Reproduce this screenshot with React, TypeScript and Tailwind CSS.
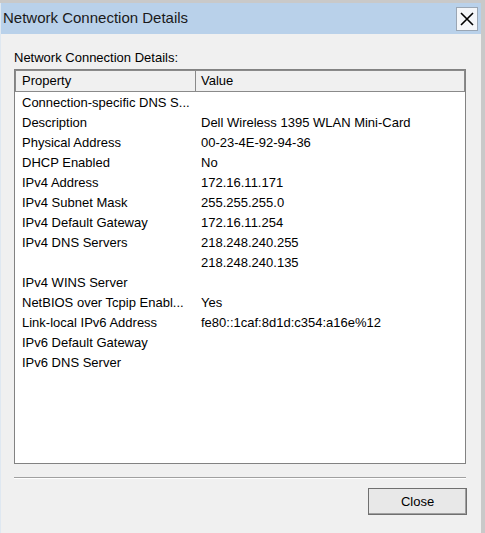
const rows: [string, string][] = [
  ["Connection-specific DNS S...", ""],
  ["Description", "Dell Wireless 1395 WLAN Mini-Card"],
  ["Physical Address", "00-23-4E-92-94-36"],
  ["DHCP Enabled", "No"],
  ["IPv4 Address", "172.16.11.171"],
  ["IPv4 Subnet Mask", "255.255.255.0"],
  ["IPv4 Default Gateway", "172.16.11.254"],
  ["IPv4 DNS Servers", "218.248.240.255"],
  ["", "218.248.240.135"],
  ["IPv4 WINS Server", ""],
  ["NetBIOS over Tcpip Enabl...", "Yes"],
  ["Link-local IPv6 Address", "fe80::1caf:8d1d:c354:a16e%12"],
  ["IPv6 Default Gateway", ""],
  ["IPv6 DNS Server", ""],
];

export default function App() {
  return (
    <div className="flex h-[533px] w-[485px] flex-col overflow-hidden bg-[#c9c9c9] pt-[3px] pr-[4px] font-['Liberation_Sans',Arial,sans-serif] text-[13px] text-black">
      <div className="flex flex-1 flex-col border-l border-[#dfe8f1] bg-[#f0f0f0]">
        {/* title bar */}
        <div className="flex h-[31px] items-center justify-between bg-[#b9d1ea] pl-[2px] pr-[3px]">
          <span className="text-[15px] text-[#1a1a1a]">Network Connection Details</span>
          <button className="mt-[1px] flex h-[24px] w-[22px] items-center justify-center border border-[#9aa6b4] bg-[#f4f6f9]">
            <svg width="16" height="16" viewBox="0 0 16 16">
              <path d="M2 2 L14 14 M14 2 L2 14" stroke="#000" strokeWidth="1.6" />
            </svg>
          </button>
        </div>

        <div className="flex flex-1 flex-col px-[13px]">
          <div className="pt-[16px] pb-[3px] leading-[16px]">Network Connection Details:</div>

          <div className="mr-[2px] flex h-[395px] flex-col border border-[#828282] bg-white">
            <div className="flex h-[22px] border border-[#8a8a8a] bg-[#f0f0f0] leading-[20px]">
              <div className="w-[180px] border-r border-[#8a8a8a] pl-[6px]">Property</div>
              <div className="pl-[5px]">Value</div>
            </div>
            <div className="flex flex-col pt-[1px]">
              {rows.map(([p, v], i) => (
                <div key={i} className="flex h-[20px] items-center">
                  <div className="w-[179px] pl-[7px]">{p}</div>
                  <div className="pl-[7px]">{v}</div>
                </div>
              ))}
            </div>
          </div>

          <div className="mt-[13px] mr-[2px] border-t border-[#a0a0a0] border-b border-b-white" />

          <div className="mt-[9px] flex justify-end pr-[1px]">
            <button className="h-[27px] w-[99px] border border-[#707070] bg-[#e8e8e8] text-[13px] shadow-[inset_-1px_-1px_0_#a0a0a0]">
              Close
            </button>
          </div>
        </div>
      </div>
    </div>
  );
}
